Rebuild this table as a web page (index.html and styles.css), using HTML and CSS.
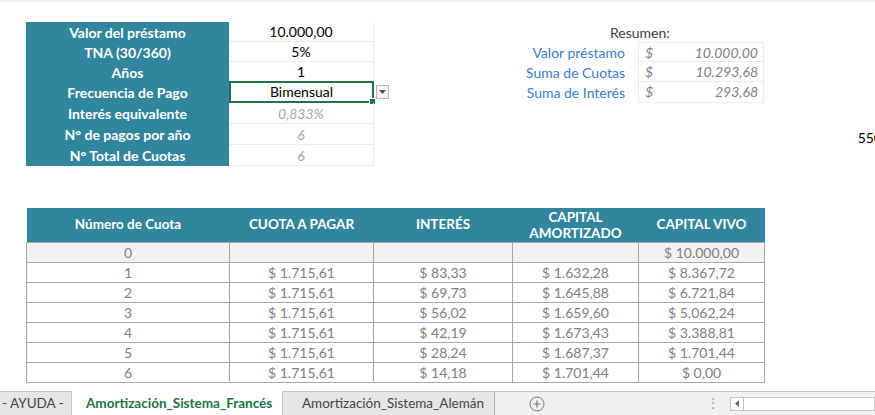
FILE: index.html
```html
<!DOCTYPE html>
<html lang="es">
<head>
<meta charset="utf-8">
<title>Amortización Sistema Francés</title>
<link rel="stylesheet" href="styles.css">
</head>
<body>
<div class="sheet">
  <div class="topline"></div>
  <div class="top">
    <div class="form">
      <div class="lbl">Valor del préstamo</div><div class="val">10.000,00</div><div class="blank"></div>
      <div class="lbl">TNA (30/360)</div><div class="val">5%</div><div class="blank"></div>
      <div class="lbl">Años</div><div class="val">1</div><div class="blank"></div>
      <div class="lbl r21">Frecuencia de Pago</div><div class="val sel">Bimensual<span class="handle"></span></div><div class="blank"><span class="drop"><svg width="7" height="4" viewBox="0 0 7 4"><path d="M0 0h7L3.5 4z" fill="#555"/></svg></span></div>
      <div class="lbl r21">Interés equivalente</div><div class="val calc">0,833%</div><div class="blank"></div>
      <div class="lbl r21">N° de pagos por año</div><div class="val calc">6</div><div class="blank"></div>
      <div class="lbl r21">N° Total de Cuotas</div><div class="val calc">6</div><div class="blank"></div>
    </div>
    <div class="resumen">
      <div class="rtitle">Resumen:</div>
      <div class="rlbl">Valor préstamo</div><div class="rval first"><span>$</span><span>10.000,00</span></div>
      <div class="rlbl">Suma de Cuotas</div><div class="rval"><span>$</span><span>10.293,68</span></div>
      <div class="rlbl">Suma de Interés</div><div class="rval"><span>$</span><span>293,68</span></div>
    </div>
    <div class="stray">550</div>
  </div>
  <table class="amort">
    <colgroup><col class="c1"><col class="c2"><col class="c3"><col class="c4"><col class="c5"></colgroup>
    <thead>
      <tr><th>Número de Cuota</th><th>CUOTA A PAGAR</th><th>INTERÉS</th><th class="two">CAPITAL<br>AMORTIZADO</th><th>CAPITAL VIVO</th></tr>
    </thead>
    <tbody>
      <tr class="zero"><td>0</td><td></td><td></td><td></td><td>$ 10.000,00</td></tr>
      <tr><td>1</td><td>$ 1.715,61</td><td>$ 83,33</td><td>$ 1.632,28</td><td>$ 8.367,72</td></tr>
      <tr><td>2</td><td>$ 1.715,61</td><td>$ 69,73</td><td>$ 1.645,88</td><td>$ 6.721,84</td></tr>
      <tr><td>3</td><td>$ 1.715,61</td><td>$ 56,02</td><td>$ 1.659,60</td><td>$ 5.062,24</td></tr>
      <tr><td>4</td><td>$ 1.715,61</td><td>$ 42,19</td><td>$ 1.673,43</td><td>$ 3.388,81</td></tr>
      <tr><td>5</td><td>$ 1.715,61</td><td>$ 28,24</td><td>$ 1.687,37</td><td>$ 1.701,44</td></tr>
      <tr><td>6</td><td>$ 1.715,61</td><td>$ 14,18</td><td>$ 1.701,44</td><td>$ 0,00</td></tr>
    </tbody>
  </table>
  <div class="tabs">
    <div class="tab help">- AYUDA -</div>
    <div class="tab active">Amortización_Sistema_Francés</div>
    <div class="tab plain">Amortización_Sistema_Alemán</div>
    <div class="add"><svg width="16" height="16" viewBox="0 0 16 16"><circle cx="8" cy="8" r="7" fill="none" stroke="#777" stroke-width="1"/><path d="M8 4.5v7M4.5 8h7" stroke="#777" stroke-width="1.2"/></svg></div>
    <div class="dots">⋮</div>
    <div class="hscroll"><span class="sbtn"><svg width="4" height="7" viewBox="0 0 4 7"><path d="M4 0v7L0 3.5z" fill="#666"/></svg></span><span class="track"></span></div>
  </div>
</div>
</body>
</html>
```
FILE: styles.css
```css
html, body {
  margin: 0;
  padding: 0;
  background: #fff;
}
body {
  font-family: Lato, "Open Sans", sans-serif;
  font-size: 14px;
  color: #000;
  width: 875px;
  height: 415px;
  overflow: hidden;
}
.sheet {
  width: 875px;
  height: 415px;
  display: flex;
  flex-direction: column;
  overflow: hidden;
}
.sheet > * { flex-shrink: 0; }
.topline {
  height: 2px;
  background: #f0f0f0;
}
.top {
  display: flex;
  align-items: flex-start;
  margin-top: 20px;
  height: 144px;
}
.form {
  margin-left: 26px;
  display: grid;
  grid-template-columns: 203px 145px 16px;
  grid-template-rows: 20px 20px 20px 21px 21px 21px 21px;
}
.lbl {
  background: #31859c;
  color: #fff;
  font-weight: bold;
  text-align: center;
  line-height: 21px;
}
.val {
  text-align: center;
  line-height: 20px;
  border-bottom: 1px solid #ececec;
  border-right: 1px solid #ececec;
  box-sizing: border-box;
  position: relative;
}
.val.calc {
  color: #a6a6a6;
  font-style: italic;
  line-height: 21px;
}
.val.sel {
  border: 2px solid #217346;
  line-height: 18px;
  margin-top: -1px;
}
.handle {
  position: absolute;
  right: -4px;
  bottom: -4px;
  width: 5px;
  height: 5px;
  background: #217346;
  border: 1px solid #fff;
}
.blank { position: relative; }
.drop {
  position: absolute;
  left: 2px;
  top: 3px;
  width: 13px;
  height: 14px;
  border: 1px solid #b5b5b5;
  background: #fafafa;
  display: flex;
  align-items: center;
  justify-content: center;
  box-sizing: border-box;
}
.resumen {
  margin-left: 115px;
  display: grid;
  grid-template-columns: 120px 126px;
  column-gap: 13px;
  grid-template-rows: 20px 20px 20px 21px;
}
.rtitle {
  grid-column: 1 / 3;
  color: #404040;
  line-height: 22px;
  padding-left: 105px;
}
.rlbl {
  color: #3a7ccc;
  text-align: right;
  line-height: 21px;
}
.rval {
  display: flex;
  justify-content: space-between;
  padding: 0 5px 0 6px;
  color: #808080;
  font-style: italic;
  line-height: 20px;
  border: 1px solid #ececec;
  border-top: none;
}
.rval.first { border-top: 1px solid #ececec; line-height: 19px; }
.stray {
  margin-left: auto;
  margin-right: -7px;
  margin-top: 106px;
  line-height: 20px;
}
.amort {
  margin-top: 42px;
  margin-left: 26px;
  border-collapse: collapse;
  table-layout: fixed;
  width: 738px;
  color: #808080;
}
.c1 { width: 203px; }
.c2 { width: 144px; }
.c3 { width: 139px; }
.c4 { width: 126px; }
.c5 { width: 126px; }
.amort thead tr { height: 34px; }
.amort th {
  background: #31859c;
  color: #fff;
  font-weight: bold;
  padding: 0;
  font-size: 13.5px;
  line-height: 17px;
}
.amort th.two { padding-top: 1px; line-height: 16px; }
.amort tbody tr { height: 20px; }
.amort td {
  padding: 0;
  line-height: 17px;
  text-align: center;
  border: 1px solid #a6a6a6;
}
.amort tr.zero td { background: #f2f2f2; }
.tabs {
  margin-top: auto;
  height: 23px;
  border-top: 1px solid #c6c6c6;
  background: #f0f0f0;
  display: flex;
  align-items: stretch;
  color: #444;
  font-size: 13.5px;
}
.tab {
  line-height: 23px;
  background: #e6e6e6;
  border-right: 1px solid #c6c6c6;
  box-sizing: border-box;
  white-space: nowrap;
  overflow: hidden;
}
.tab.help {
  width: 72px;
  padding-left: 2px;
}
.tab.active {
  width: 211px;
  background: #fff;
  color: #217346;
  font-weight: bold;
  padding-left: 14px;
  margin-top: -1px;
  line-height: 24px;
}
.tab.plain {
  width: 212px;
  padding-left: 19px;
  border-right: 1px solid #aaa;
}
.add {
  margin-left: 34px;
  display: flex;
  align-items: center;
}
.dots {
  margin-left: 161px;
  color: #aaa;
  line-height: 23px;
}
.hscroll {
  margin-left: 10px;
  display: flex;
  align-items: center;
  flex: 1;
}
.sbtn {
  width: 14px;
  height: 14px;
  border: 1px solid #c6c6c6;
  background: #fff;
  box-sizing: border-box;
  display: flex;
  align-items: center;
  justify-content: center;
}
.track {
  flex: 1;
  height: 14px;
  background: #fff;
  border: 1px solid #c6c6c6;
  border-left: none;
  box-sizing: border-box;
}
```
